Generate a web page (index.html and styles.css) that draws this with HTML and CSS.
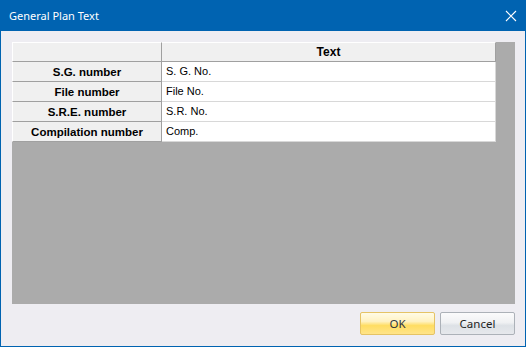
FILE: index.html
```html
<!DOCTYPE html>
<html>
<head>
<meta charset="utf-8">
<link rel="stylesheet" href="styles.css">
</head>
<body>
<div class="window">
  <div class="titlebar">
    <span class="title">General Plan Text</span>
    <svg class="close" width="12" height="12" viewBox="0 0 12 12"><path d="M1 1 L11 11 M11 1 L1 11" stroke="#fff" stroke-width="1.1" fill="none"/></svg>
  </div>
  <div class="content">
    <div class="gridview">
      <div class="table">
        <div class="corner"></div>
        <div class="colhead">Text</div>
        <div class="rowhead">S.G. number</div>
        <div class="cell">S. G. No.</div>
        <div class="rowhead">File number</div>
        <div class="cell">File No.</div>
        <div class="rowhead">S.R.E. number</div>
        <div class="cell">S.R. No.</div>
        <div class="rowhead">Compilation number</div>
        <div class="cell">Comp.</div>
      </div>
    </div>
    <div class="buttons">
      <button class="btn ok">OK</button>
      <button class="btn cancel">Cancel</button>
    </div>
  </div>
</div>
</body>
</html>
```
FILE: styles.css
```css
html, body {
  margin: 0;
  padding: 0;
  background: #eeedf2;
}
.window {
  width: 526px;
  height: 347px;
  box-sizing: border-box;
  border: 1px solid #0063b1;
  background: #eeedf2;
  display: flex;
  flex-direction: column;
}
.titlebar {
  height: 30px;
  background: #0063b1;
  display: flex;
  align-items: center;
  justify-content: space-between;
  padding: 0 8px 0 8px;
  flex: none;
}
.title {
  color: #fff;
  font-family: "Noto Sans", sans-serif;
  font-size: 11px;
  position: relative;
  top: -1px;
}
.close {
  display: block;
}
.content {
  flex: 1;
  display: flex;
  flex-direction: column;
  padding: 11px 10px 0 11px;
}
.gridview {
  height: 262px;
  background: #ababab;
}
.table {
  display: grid;
  grid-template-columns: 150px 334px;
  grid-auto-rows: 20px;
  font-family: "Liberation Sans", Arial, sans-serif;
  font-size: 11px;
  color: #000;
}
.corner, .colhead, .rowhead {
  background: #f0f0f0;
  box-sizing: border-box;
  border-right: 1px solid #a0a0a0;
  border-bottom: 1px solid #a0a0a0;
}
.corner {
  border-top: 1px solid #fff;
  border-left: 1px solid #fff;
}
.colhead {
  border-top: 1px solid #fff;
  font-weight: bold;
  font-size: 12px;
  display: flex;
  align-items: center;
  justify-content: center;
}
.rowhead {
  border-left: 1px solid #fff;
  font-weight: bold;
  font-size: 11.5px;
  display: flex;
  align-items: center;
  justify-content: center;
}
.cell {
  background: #fff;
  box-sizing: border-box;
  border-right: 1px solid #d8d8d8;
  border-bottom: 1px solid #d8d8d8;
  display: flex;
  align-items: center;
  padding-left: 4px;
  padding-bottom: 1px;
}
.buttons {
  display: flex;
  justify-content: flex-end;
  gap: 5px;
  margin-top: 8px;
}
.btn {
  width: 75px;
  height: 23px;
  box-sizing: border-box;
  font-family: "Noto Sans", sans-serif;
  font-size: 11.5px;
  color: #1e1e1e;
  padding: 0;
  border-radius: 2px;
}
.ok {
  border: 1px solid #e5c365;
  background: linear-gradient(#fffbe6 0%, #fff2c2 40%, #ffdd62 60%, #ffe48a 100%);
  color: #2d3440;
}
.cancel {
  border: 1px solid #acb1b8;
  background: linear-gradient(#fbfbfc 0%, #f0f1f3 45%, #dde1e6 60%, #e6e8ec 100%);
}
```
